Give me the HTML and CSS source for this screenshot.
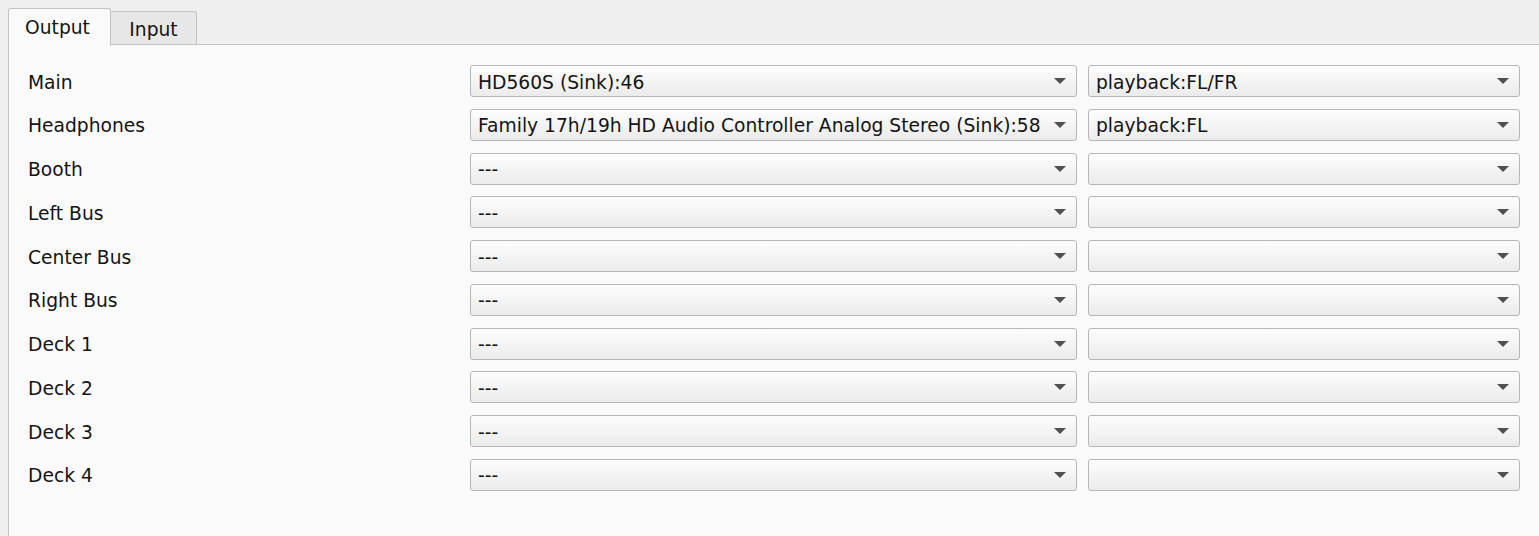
FILE: index.html
```html
<!DOCTYPE html>
<html>
<head>
<meta charset="utf-8">
<link rel="stylesheet" href="styles.css">
</head>
<body>
<div class="tabbar">
  <div class="tab active">Output</div>
  <div class="tab">Input</div>
  <div class="tabfill"></div>
</div>
<div class="pane">
  <div class="grid">
    <div class="label">Main</div>
    <div class="combo"><span>HD560S (Sink):46</span><i class="arrow"></i></div>
    <div class="combo"><span>playback:FL/FR</span><i class="arrow"></i></div>

    <div class="label">Headphones</div>
    <div class="combo"><span>Family 17h/19h HD Audio Controller Analog Stereo (Sink):58</span><i class="arrow"></i></div>
    <div class="combo"><span>playback:FL</span><i class="arrow"></i></div>

    <div class="label">Booth</div>
    <div class="combo"><span>---</span><i class="arrow"></i></div>
    <div class="combo"><span></span><i class="arrow"></i></div>

    <div class="label">Left Bus</div>
    <div class="combo"><span>---</span><i class="arrow"></i></div>
    <div class="combo"><span></span><i class="arrow"></i></div>

    <div class="label">Center Bus</div>
    <div class="combo"><span>---</span><i class="arrow"></i></div>
    <div class="combo"><span></span><i class="arrow"></i></div>

    <div class="label">Right Bus</div>
    <div class="combo"><span>---</span><i class="arrow"></i></div>
    <div class="combo"><span></span><i class="arrow"></i></div>

    <div class="label">Deck 1</div>
    <div class="combo"><span>---</span><i class="arrow"></i></div>
    <div class="combo"><span></span><i class="arrow"></i></div>

    <div class="label">Deck 2</div>
    <div class="combo"><span>---</span><i class="arrow"></i></div>
    <div class="combo"><span></span><i class="arrow"></i></div>

    <div class="label">Deck 3</div>
    <div class="combo"><span>---</span><i class="arrow"></i></div>
    <div class="combo"><span></span><i class="arrow"></i></div>

    <div class="label">Deck 4</div>
    <div class="combo"><span>---</span><i class="arrow"></i></div>
    <div class="combo"><span></span><i class="arrow"></i></div>
  </div>
</div>
</body>
</html>
```
FILE: styles.css
```css
html, body {
  margin: 0;
  padding: 0;
  background: #efefef;
  font-family: "DejaVu Sans", sans-serif;
  font-size: 18.7px;
  color: #141414;
  overflow: hidden;
  height: 536px;
}
.tabbar {
  display: flex;
  align-items: flex-end;
  padding: 8px 0 0 8px;
  height: 37px;
}
.tab {
  box-sizing: border-box;
  border: 1px solid #c2c2c2;
  border-bottom: none;
  border-radius: 3px 3px 0 0;
  display: flex;
  align-items: center;
  justify-content: center;
}
.tab.active {
  width: 103px;
  height: 38px;
  background: #fafafa;
  margin-bottom: -1px;
  position: relative;
  z-index: 1;
  padding-right: 4px;
}
.tab:not(.active) {
  width: 86px;
  height: 34px;
  background: #e7e7e7;
  border-left: none;
  border-bottom: 1px solid #c2c2c2;
  padding-top: 3px;
}
.tabfill {
  flex: 1;
  height: 0;
  border-bottom: 1px solid #c2c2c2;
}
.pane {
  margin-left: 8px;
  background: #fafafa;
  border-left: 1px solid #c2c2c2;
  height: 500px;
  box-sizing: border-box;
  padding: 20px 0 0 19px;
}
.grid {
  display: grid;
  grid-template-columns: 431px 607px 432px;
  column-gap: 11px;
  row-gap: 11.75px;
  grid-auto-rows: 32px;
  align-items: center;
}
.label {
  padding-top: 2px;
}
.combo {
  box-sizing: border-box;
  height: 32px;
  border: 1px solid #b6b6b6;
  border-radius: 3px;
  background: linear-gradient(#fdfdfd, #ebebeb);
  display: flex;
  align-items: center;
  padding: 2px 10px 0 7px;
  white-space: nowrap;
}
.combo span {
  flex: 1;
  overflow: hidden;
}
.arrow {
  width: 0;
  height: 0;
  border-left: 6px solid transparent;
  border-right: 6px solid transparent;
  border-top: 6px solid #505050;
  margin: -2px 0 0 10px;
}
```
